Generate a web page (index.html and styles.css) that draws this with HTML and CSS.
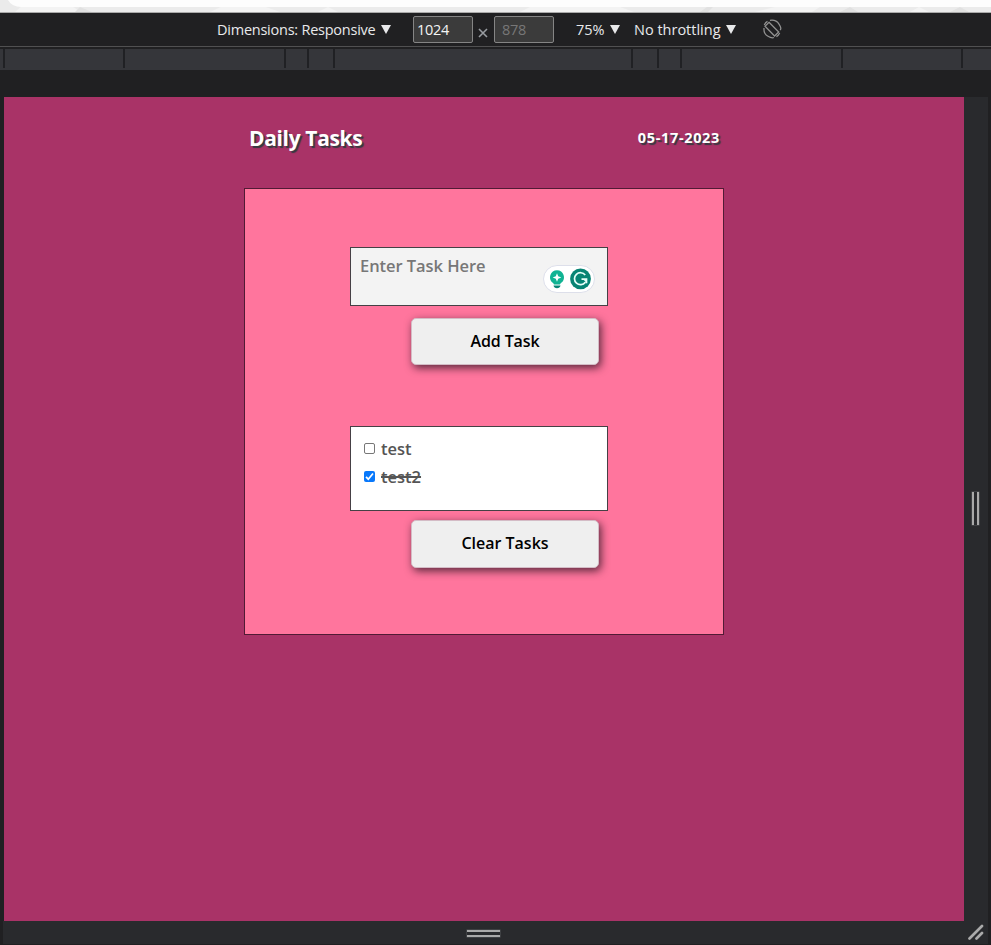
FILE: index.html
```html
<!DOCTYPE html>
<html lang="en">
<head>
<meta charset="utf-8">
<title>Daily Tasks</title>
<link rel="stylesheet" href="styles.css">
</head>
<body>
<div class="browser-edge">
  <svg width="991" height="13" viewBox="0 0 991 13"><path d="M0 0h991v12H0z" fill="#ebebeb"/><path d="M15 12l8-7h47l11 7zM210 12l15-7h35l20 7zM318 12l10-5 10 5zM520 12l10-5h90l14 5zM755 12l20-5h45l-8 5zM910 12l9-5 10 5z" fill="#f3f3f3"/><path d="M75 12l5-5 12 5zM700 12l7-5h6l-5 5zM840 12l10-5 8 5zM950 12l10-5 9 5z" fill="#e1e1e1"/><path d="M8 0Q12 7 21 7H991V0z" fill="#fdfdfd"/><path d="M0 12h991v1H0z" fill="#aaa"/></svg>
</div>
<header class="toolbar">
  <span class="label dimensions">Dimensions: Responsive</span><i class="arrow"></i>
  <span class="size">1024</span>
  <svg class="times" width="10" height="10" viewBox="0 0 10 10"><path d="M1 1l8 8M9 1L1 9" stroke="#989ca1" stroke-width="1.6"/></svg>
  <span class="size dim">878</span>
  <span class="label percent">75%</span><i class="arrow"></i>
  <span class="label throttle">No throttling</span><i class="arrow"></i>
  <svg class="rotate" width="20" height="20" viewBox="0 0 20 20" fill="none" stroke="#929292" stroke-width="1.25"><path d="M7 3.3L16.7 13 12.6 17 3 7.3z"/><path d="M8 1.4Q14 .4 17 5.1T18 11M2 9Q1.5 14.5 5.6 17T12 18.5M2.3 6Q3.4 3.5 5.5 2.4M17.7 14Q16.5 16.5 14.4 17.6"/></svg>
</header>
<div class="ruler">
  <i class="s3"></i><i class="s118"></i><i class="s159"></i><i class="s21"></i><i class="s24"></i><i class="s296"></i><i class="s24"></i><i class="s21"></i><i class="s159"></i><i class="s118"></i><i class="last"></i>
</div>
<div class="workspace">
  <main class="viewport">
    <div class="heading"><h1>Daily Tasks</h1><time>05-17-2023</time></div>
    <section class="card">
      <div class="entry">
        <span class="placeholder">Enter Task Here</span>
        <div class="assistant">
          <svg width="52" height="28" viewBox="0 0 52 28"><rect x=".5" y=".5" width="51" height="27" rx="13.5" fill="#fff" stroke="#dddfea"/><path d="M14 5.2a7 7 0 0 0-4.3 12.5c.9.7 1.2 1.2 1.2 1.8h6.2c0-.6.3-1.1 1.2-1.8A7 7 0 0 0 14 5.2z" fill="#11b393"/><path d="M14 8.2l1.2 3.1 3.1 1.2-3.1 1.2-1.2 3.1-1.2-3.1-3.1-1.2 3.1-1.2z" fill="#fff"/><path d="M10.5 20.5h7q-.6 2.7-3.5 2.7t-3.5-2.7z" fill="#078474"/><circle cx="37.5" cy="13.8" r="10.4" fill="#078474"/><path d="M42.2 10a6 6 0 1 0 .1 7.3M38.5 14.2h5v4" fill="none" stroke="#e8fffa" stroke-width="1.7"/><path d="M40 14.3h4v4z" fill="#e8fffa"/></svg>
        </div>
      </div>
      <div class="button add"><span>Add Task</span></div>
      <div class="tasks">
        <div class="task"><i class="check"></i><span class="t1">test</span></div>
        <div class="task second"><i class="check checked"><svg width="11" height="11" viewBox="0 0 11 11"><path d="M2 5.8l2.3 2.4L9 2.5" fill="none" stroke="#fff" stroke-width="1.7"/></svg></i><span class="t2 done">test2</span></div>
      </div>
      <div class="button clear"><span>Clear Tasks</span></div>
    </section>
  </main>
  <aside class="right-rail"><div class="grip"></div></aside>
</div>
<footer><div class="bottom-grip"></div><svg class="corner" width="16" height="17" viewBox="0 0 16 17"><path d="M1.5 14.5L14 2M8.5 14.5l5.5-5.5" stroke="#aaa" stroke-width="2.7" stroke-linecap="round"/></svg></footer>
</body>
</html>
```

FILE: styles.css
```css
* { box-sizing: border-box; }
body { margin: 0; width: 991px; height: 945px; overflow: hidden; background: #202022; font-family: "Open Sans", "Noto Sans", sans-serif; }
svg { display: block; flex-shrink: 0; }
.browser-edge { height: 13px; }
.toolbar { height: 34px; display: flex; align-items: center; padding-left: 217px; border-bottom: 1px solid #505051; color: #e8e9eb; font-size: 14.5px; }
.label { white-space: nowrap; flex-shrink: 0; line-height: 20px; }
.dimensions { width: 159px; letter-spacing: -.24px; }
.percent { margin-left: 22px; width: 29px; letter-spacing: -.1px; }
.throttle { margin-left: 14px; width: 86px; letter-spacing: 0; }
.arrow { width: 10px; height: 9px; margin-left: 5px; background: #e8e9eb; clip-path: polygon(0 0, 100% 0, 50% 100%); }
.percent + .arrow { margin-left: 5px; }
.throttle + .arrow { margin-left: 6px; }
.size { width: 60px; height: 27px; border: 1px solid #858585; border-radius: 2px; background: #3b3b3b; padding-left: 3px; line-height: 26px; letter-spacing: -.3px; margin-left: 22px; color: #f4f4f4; }
.size.dim { color: #777; margin-left: 6px; padding-left: 7px; }
.times { margin: 6px 0 0 5px; }
.rotate { margin: -2px 0 0 26px; }
.ruler { height: 21px; margin-top: 2px; display: flex; background: #35363a; }
.ruler i { height: 19px; border-right: 2px solid #202124; }
.s3 { width: 5px; }
.s118 { width: 120px; }
.s159 { width: 161px; }
.s21 { width: 23px; }
.s24 { width: 26px; }
.s296 { width: 298px; }
.ruler .last { border: 0; flex: 1; }
.workspace { display: flex; height: 824px; margin-top: 27px; padding-left: 4px; }
.viewport { width: 960px; background: #a93367; padding-left: 240px; }
.right-rail { width: 24px; background: #292a2d; padding: 395px 0 0 8px; }
.grip { width: 7px; height: 33px; border: solid #a9a9a9; border-width: 0 2px; box-shadow: 0 0 0 .5px #55565a; }
.heading { display: flex; justify-content: space-between; align-items: center; width: 480px; height: 91px; padding: 0 4px 10px 5px; color: #fff; text-shadow: 2px 2px 1px #343a40; }
.heading h1 { margin: 0; font-size: 21px; line-height: 30px; letter-spacing: -.35px; white-space: nowrap; }
time { font-size: 14.5px; font-weight: 700; letter-spacing: .65px; white-space: nowrap; }
.card { width: 480px; height: 447px; background: #ff759d; border: 1px solid #511b35; padding: 58px 0 0 105px; }
.entry { width: 258px; height: 59px; background: #f3f3f3; border: 1px solid #454045; display: flex; justify-content: space-between; padding: 6px 12px 0 9px; color: #777; font-size: 16.5px; font-weight: 600; }
.placeholder { line-height: 24px; letter-spacing: -.05px; white-space: nowrap; }
.assistant { padding-top: 11px; }
.button { width: 188px; height: 47px; margin-left: 61px; border-radius: 5px; border: 1px solid #d4bcc6; background: #efefef; box-shadow: 2px 3px 8px rgba(35,15,28,.75); display: flex; align-items: center; justify-content: center; color: #000; font-size: 16px; font-weight: 600; white-space: nowrap; padding-bottom: 2px; }
.add { margin-top: 12px; }
.add span { letter-spacing: -.1px; }
.clear { height: 48px; margin-top: 9px; }
.tasks { width: 258px; height: 85px; margin-top: 61px; border: 1px solid #454045; background: #fff; padding: 9px 0 0 13px; color: #555; font-size: 16.5px; font-weight: 600; }
.task { height: 28px; display: flex; align-items: center; line-height: 24px; padding-bottom: 3px; }
.check { width: 11px; height: 11px; border: 1px solid #777; border-radius: 2px; margin-right: 6px; }
.checked { border: 0; background: #0878fb; }
.done { text-decoration: line-through; text-decoration-thickness: 2px; }
footer { height: 23px; width: 985px; margin-left: 3px; background: #292a2d; display: flex; align-items: flex-start; }
.bottom-grip { width: 33px; height: 7px; margin: 9px 0 0 464px; border: solid #a9a9a9; border-width: 2px 0; box-shadow: 0 0 0 .5px #55565a; }
.corner { margin: 3px 4px 0 auto; }
```
